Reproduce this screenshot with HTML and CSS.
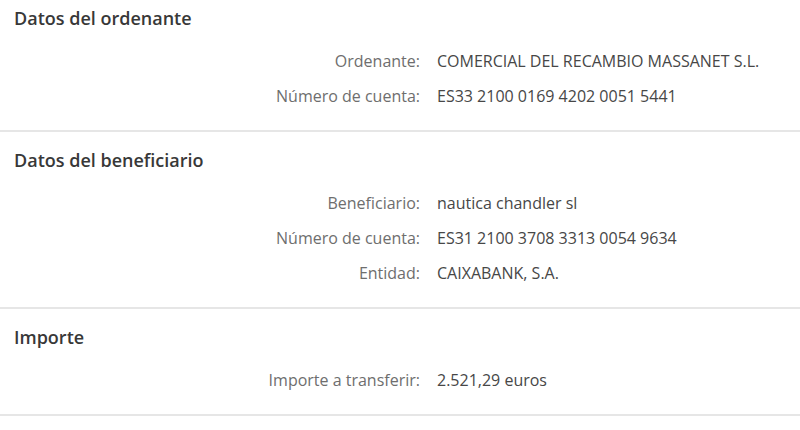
FILE: index.html
```html
<!DOCTYPE html>
<html lang="es">
  <head>
    <meta charset="UTF-8" />
    <meta name="viewport" content="width=device-width, initial-scale=1.0" />
    <title>Resumen de transferencia</title>
    <link rel="stylesheet" href="styles.css">
  </head>
  <body>
    <div class="summary">

      <!-- Ordenante -->
      <div class="section first">
        <h3 class="section-title">Datos del ordenante</h3>
        <div class="rows">
          <div class="row">
            <span class="label">Ordenante:</span>
            <span class="value">COMERCIAL DEL RECAMBIO MASSANET S.L.</span>
          </div>
          <div class="row">
            <span class="label">Número de cuenta:</span>
            <span class="value">ES33 2100 0169 4202 0051 5441</span>
          </div>
        </div>
      </div>

      <!-- Beneficiario -->
      <div class="section">
        <h3 class="section-title">Datos del beneficiario</h3>
        <div class="rows">
          <div class="row">
            <span class="label">Beneficiario:</span>
            <span class="value">nautica chandler sl</span>
          </div>
          <div class="row">
            <span class="label">Número de cuenta:</span>
            <span class="value">ES31 2100 3708 3313 0054 9634</span>
          </div>
          <div class="row">
            <span class="label">Entidad:</span>
            <span class="value">CAIXABANK, S.A.</span>
          </div>
        </div>
      </div>

      <!-- Importe -->
      <div class="section">
        <h3 class="section-title">Importe</h3>
        <div class="rows">
          <div class="row">
            <span class="label">Importe a transferir:</span>
            <span class="value">2.521,29 euros</span>
          </div>
        </div>
      </div>

    </div>
  </body>
</html>
```

FILE: styles.css
```css
body {
  margin: 0;
  background-color: #fff;
  font-family: "Open Sans", "Noto Sans", sans-serif;
  overflow: hidden;
}
.summary {
  width: 800px;
}
.section {
  padding: 16px 0 0;
  border-bottom: 2px solid #e6e6e6;
}
.section.first {
  padding-top: 6px;
}
.section-title {
  margin: 0;
  padding: 0 14px;
  font-size: 18px;
  font-weight: 600;
  line-height: 24px;
  color: #383838;
}
.rows {
  padding: 13px 0 17px;
}
.row {
  display: flex;
  align-items: center;
  height: 35px;
  font-size: 16px;
}
.label {
  width: 420px;
  text-align: right;
  color: #6e6e6e;
}
.value {
  margin-left: 17px;
  color: #474747;
}
```
